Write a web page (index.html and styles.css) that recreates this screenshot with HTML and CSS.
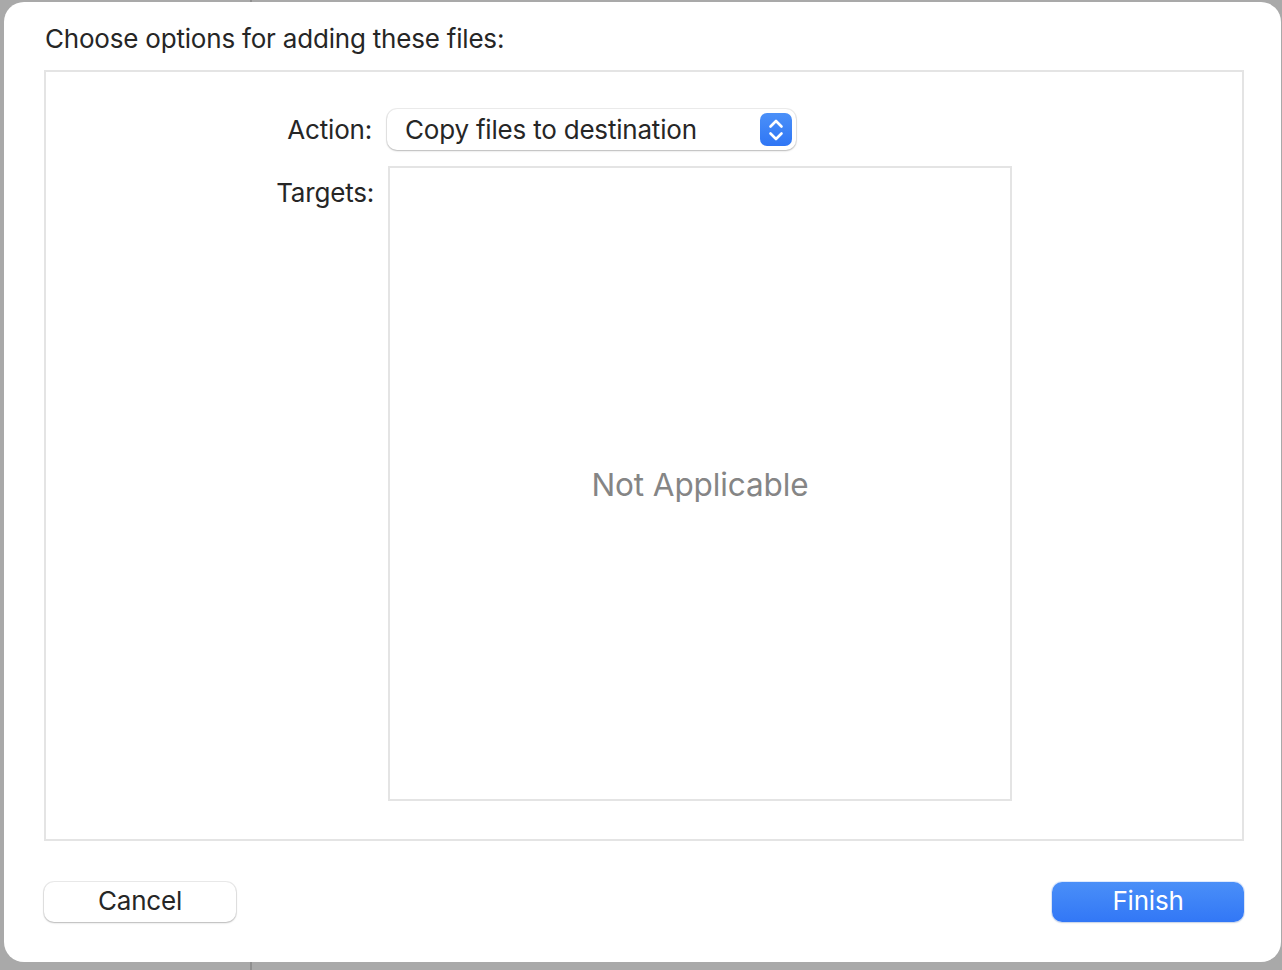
FILE: index.html
```html
<!DOCTYPE html>
<html lang="en">
<head>
<meta charset="utf-8">
<title>Choose options for adding these files</title>
<link rel="stylesheet" href="styles.css">
</head>
<body>
<div class="sheet">
  <div class="title">Choose options for adding these files:</div>
  <div class="panel">
    <div class="form">
      <div class="label label-action">Action:</div>
      <div class="popup">
        <span class="popup-text">Copy files to destination</span>
        <span class="stepper">
          <svg width="22" height="28" viewBox="0 0 22 28" fill="none" stroke="#fff" stroke-width="2.6" stroke-linecap="round" stroke-linejoin="round">
            <path d="M5.5 10.5 L11 5 L16.5 10.5"/>
            <path d="M5.5 17.5 L11 23 L16.5 17.5"/>
          </svg>
        </span>
      </div>
      <div class="label label-targets">Targets:</div>
      <div class="targets">
        <span class="na">Not Applicable</span>
      </div>
    </div>
  </div>
  <div class="buttons">
    <button class="btn btn-cancel">Cancel</button>
    <button class="btn btn-finish">Finish</button>
  </div>
</div>
</body>
</html>
```

FILE: styles.css
```css
html, body {
  margin: 0;
  padding: 0;
}
body {
  width: 1282px;
  height: 970px;
  overflow: hidden;
  background:
    linear-gradient(to right, transparent 250px, #8f8f8f 250px, #8f8f8f 252px, transparent 252px),
    #a9a9a9;
  font-family: Inter, "Noto Sans", "Liberation Sans", sans-serif;
  color: #262626;
}
.sheet {
  box-sizing: border-box;
  margin: 2px 0 0 4px;
  width: 1277px;
  height: 960px;
  background: #ffffff;
  border-radius: 20px;
  padding: 22px 37px 40px 40px;
  display: flex;
  flex-direction: column;
}
.title {
  font-size: 26px;
  line-height: 30px;
  letter-spacing: -0.2px;
  margin-left: 1px;
  margin-bottom: 16px;
}
.panel {
  box-sizing: border-box;
  height: 771px;
  border: 2px solid #e4e4e4;
  padding: 37px 0 0 0;
}
.form {
  display: grid;
  grid-template-columns: 326px auto;
  column-gap: 15px;
  row-gap: 16px;
  justify-content: start;
}
.label {
  font-size: 26px;
  text-align: right;
  letter-spacing: -0.2px;
}
.label-action {
  line-height: 41px;
}
.label-targets {
  padding-top: 12px;
  line-height: 30px;
  margin-right: -2px;
}
.popup {
  box-sizing: border-box;
  width: 409px;
  height: 41px;
  border-radius: 10px;
  background: #fff;
  box-shadow: 0 0 0 1px rgba(0,0,0,0.07), 0 1px 2px rgba(0,0,0,0.22);
  display: flex;
  align-items: center;
  justify-content: space-between;
  padding: 0 4px 0 18px;
}
.popup-text {
  font-size: 26px;
  letter-spacing: -0.2px;
}
.stepper {
  width: 32px;
  height: 33px;
  border-radius: 7px;
  background: linear-gradient(to bottom, #4b90f8, #2f76f5);
  display: flex;
  align-items: center;
  justify-content: center;
}
.targets {
  box-sizing: border-box;
  width: 624px;
  height: 635px;
  margin-left: 1px;
  border: 2px solid #e4e4e4;
  display: flex;
  align-items: center;
  justify-content: center;
}
.na {
  font-size: 31.5px;
  color: #858585;
  margin-top: 2px;
  letter-spacing: -0.1px;
}
.buttons {
  margin-top: 41px;
  display: flex;
  justify-content: space-between;
}
.btn {
  box-sizing: border-box;
  width: 192px;
  height: 40px;
  border: none;
  border-radius: 10px;
  font-family: inherit;
  font-size: 26px;
  line-height: 38px;
  padding: 0 0 2px 0;
  letter-spacing: -0.2px;
}
.btn-cancel {
  background: #fff;
  color: #262626;
  box-shadow: 0 0 0 1px rgba(0,0,0,0.08), 0 1px 2px rgba(0,0,0,0.22);
}
.btn-finish {
  background: linear-gradient(to bottom, #4a8ff8, #3277f6);
  color: #fff;
  box-shadow: 0 0 0 1px rgba(47,118,245,0.15), 0 1px 2px rgba(0,0,0,0.12);
}
```
